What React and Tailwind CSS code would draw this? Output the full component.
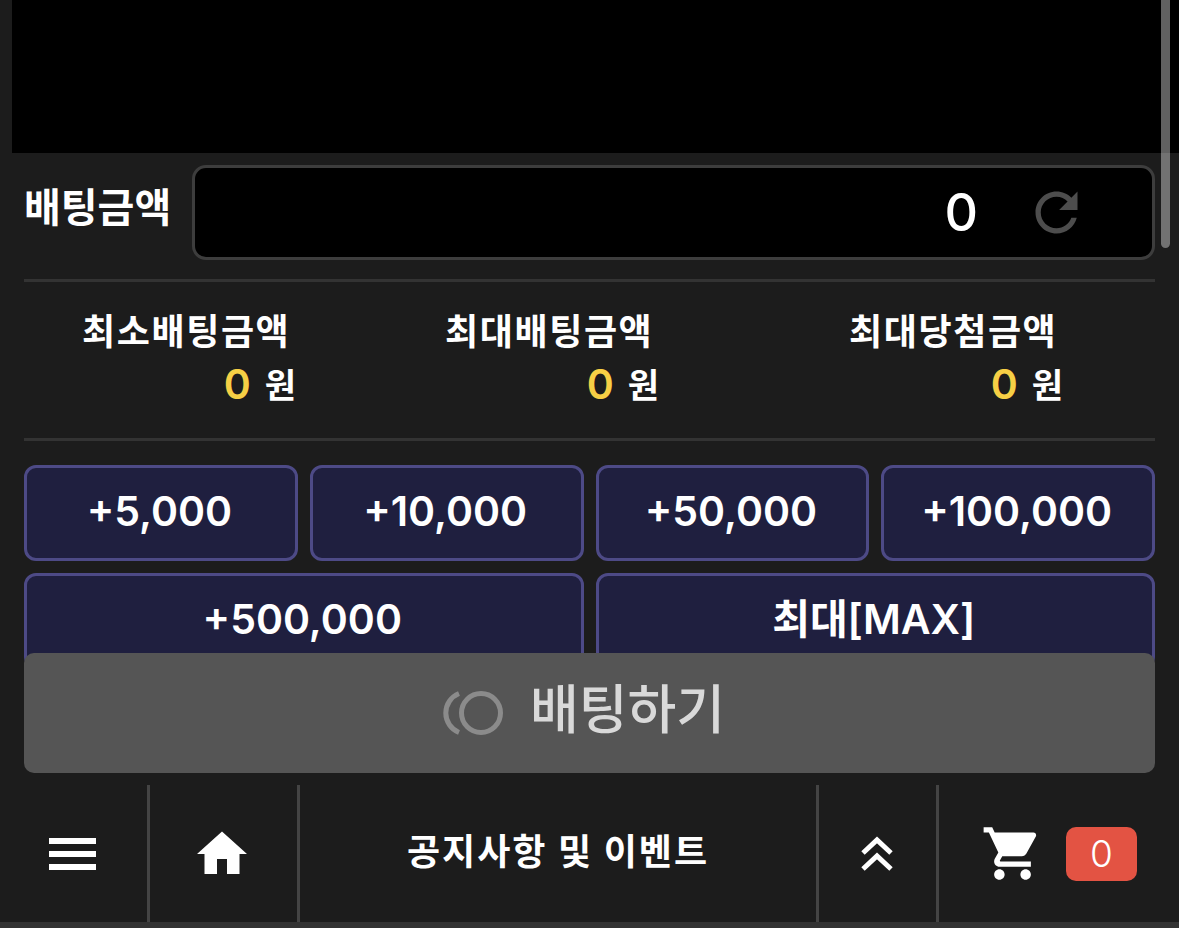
import React from 'react';

const amounts = ['+5,000', '+10,000', '+50,000', '+100,000'];

// Material style icons
const HomeIcon = () => (
  <svg viewBox="0 0 24 24" className="w-[60px] h-[60px] fill-white">
    <path d="M10 20v-6h4v6h5v-8h3L12 3 2 12h3v8z" />
  </svg>
);

const CartIcon = () => (
  <svg viewBox="0 0 24 24" className="w-[63px] h-[63px] fill-white">
    <path d="M7 18c-1.1 0-1.99.9-1.99 2S5.9 22 7 22s2-.9 2-2-.9-2-2-2zM1 2v2h2l3.6 7.59-1.35 2.45c-.16.28-.25.61-.25.96 0 1.1.9 2 2 2h12v-2H7.42c-.14 0-.25-.11-.25-.25l.03-.12.9-1.63h7.45c.75 0 1.41-.41 1.75-1.03l3.58-6.49c.08-.14.12-.31.12-.48 0-.55-.45-1-1-1H5.21l-.94-2H1zm16 16c-1.1 0-1.99.9-1.99 2s.89 2 1.99 2 2-.9 2-2-.9-2-2-2z" />
  </svg>
);

const RefreshIcon = () => (
  <svg viewBox="0 0 24 24" className="w-[63px] h-[63px] fill-[#4d4d4d]">
    <path d="M17.65 6.35C16.2 4.9 14.21 4 12 4c-4.42 0-7.99 3.58-7.99 8s3.57 8 7.99 8c3.73 0 6.84-2.55 7.73-6h-2.08c-.82 2.33-3.04 4-5.65 4-3.31 0-6-2.69-6-6s2.69-6 6-6c1.66 0 3.14.69 4.22 1.78L13 11h7V4l-2.35 2.35z" />
  </svg>
);

const Spinner = () => (
  <svg viewBox="0 0 62 46" className="w-[62px] h-[46px] fill-none stroke-[#8b8b8b]">
    <circle cx="39" cy="23" r="19.5" strokeWidth="5" />
    <path d="M17 3.5 A 21 21 0 0 0 17 42.5" strokeWidth="5" />
  </svg>
);

const LimitItem = ({ title, className }) => (
  <div className={`w-[214px] ${className}`}>
    <div className="text-[36px] leading-[44px] font-bold text-white tracking-[1.6px] whitespace-nowrap">{title}</div>
    <div className="flex justify-end items-center gap-[14px] mt-[9px] h-[44px]">
      <span className="text-[41px] font-semibold text-[#f6cf45]">0</span>
      <span className="text-[34px] font-bold text-white">원</span>
    </div>
  </div>
);

const AmountButton = ({ label, className = 'h-[96px]' }) => (
  <button className={`${className} bg-[#1f1f3f] border-[3px] border-[#4d4a86] rounded-[12px] text-white text-[41px] font-semibold flex items-start justify-center pt-[16px] pr-[3px] leading-[54px] whitespace-nowrap`}>
    {label}
  </button>
);

export default function App() {
  return (
    <div className="relative h-[928px] overflow-hidden bg-[#1c1c1c] font-['Inter','Noto_Sans_CJK_KR',sans-serif]">
      {/* video area */}
      <div className="h-[153px] ml-[12px] bg-black" />

      {/* overlay scrollbar */}
      <div className="absolute top-0 left-[1161px] w-[9px] h-[248px] bg-white/[0.38] rounded-b-[5px]" />

      <div className="px-[24px]">
        <div className="flex items-center h-[95px] mt-[12px]">
          <div className="w-[168px] text-[40px] font-bold text-white leading-none whitespace-nowrap -mt-[10px]">배팅금액</div>
          <div className="flex-1 h-full bg-black border-[3px] border-[#3d3d3d] rounded-[14px] flex items-center justify-end pr-[64px] gap-[47px]">
            <span className="text-[52px] font-medium text-white leading-none">0</span>
            <RefreshIcon />
          </div>
        </div>

        <div className="h-[3px] bg-[#333333] mt-[19px]" />

        <div className="flex h-[156px] pt-[28px]">
          <LimitItem title="최소배팅금액" className="ml-[58px]" />
          <LimitItem title="최대배팅금액" className="ml-[149px]" />
          <LimitItem title="최대당첨금액" className="ml-[190px]" />
        </div>

        <div className="h-[3px] bg-[#333333]" />

        <div className="grid grid-cols-4 gap-[12px] mt-[24px]">
          {amounts.map((a) => <AmountButton key={a} label={a} />)}
        </div>
        <div className="grid grid-cols-2 gap-[12px] mt-[12px] h-[80px]">
          <AmountButton label="+500,000" />
          <AmountButton label="최대[MAX]" />
        </div>

        <button className="relative w-full h-[120px] bg-[#555555] rounded-[10px] flex items-center justify-center gap-[26px] pr-[12px] text-[53px] font-medium text-[#d9d9d9] leading-none">
          <Spinner />
          <span className="-mt-[6px]">배팅하기</span>
        </button>
      </div>

      {/* bottom nav */}
      <nav className="flex h-[137px] mt-[12px]">
        <div className="w-[145px] flex items-center justify-center pr-[2px] border-r-[3px] border-[#444444] box-content">
          <div className="flex flex-col gap-[7px]">
            <div className="w-[47px] h-[6px] bg-white" />
            <div className="w-[47px] h-[6px] bg-white" />
            <div className="w-[47px] h-[6px] bg-white" />
          </div>
        </div>
        <div className="w-[147px] flex items-center justify-center border-r-[3px] border-[#444444] box-content">
          <div className="-ml-[3px]"><HomeIcon /></div>
        </div>
        <div className="w-[516px] flex items-center justify-center border-r-[3px] border-[#444444] box-content">
          <span className="text-[36px] font-bold text-white tracking-[2px] whitespace-nowrap -mt-[4px]">공지사항 및 이벤트</span>
        </div>
        <div className="w-[117px] flex items-center justify-center border-r-[3px] border-[#444444] box-content">
          <svg viewBox="0 0 34 38" className="w-[34px] h-[38px] -ml-[2px] fill-none stroke-white stroke-[5]">
            <path d="M3 18 L17 5 L31 18" />
            <path d="M3 34 L17 21 L31 34" />
          </svg>
        </div>
        <div className="flex-1 flex items-center pl-[42px] gap-[22px]">
          <CartIcon />
          <div className="w-[71px] h-[54px] bg-[#e35343] rounded-[10px] flex items-center justify-center text-white text-[37px] font-light leading-none">0</div>
        </div>
      </nav>
      <div className="h-[6px] bg-[#333333]" />
    </div>
  );
}
